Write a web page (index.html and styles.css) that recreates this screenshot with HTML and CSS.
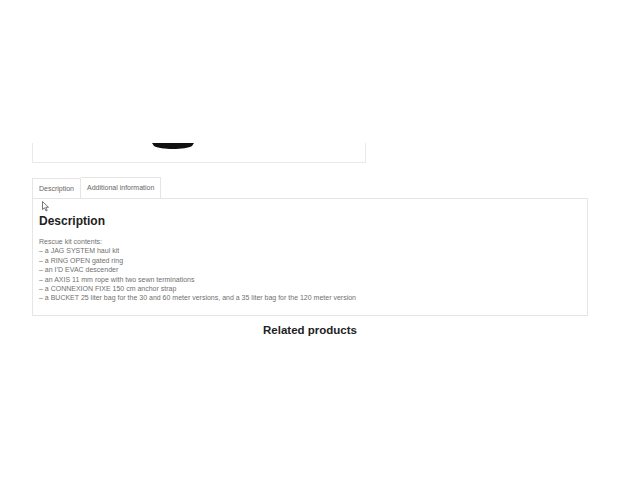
FILE: index.html
```html
<!DOCTYPE html>
<html lang="en">
<head>
    <meta charset="UTF-8">
    <title>Rescue kit</title>
    <link rel="stylesheet" href="styles.css">
</head>
<body>
    <div class="product">
        <div class="gallery">
            <svg class="bag" width="42" height="8" viewBox="0 0 42 8">
                <path d="M0 0 H42 L40 3 C34 7 8 7 2 3 Z" fill="#111"/>
            </svg>
        </div>

        <ul class="tabs">
            <li class="tab active">Description</li>
            <li class="tab">Additional information</li>
        </ul>
        <div class="panel">
            <svg class="cursor" width="8" height="11" viewBox="0 0 8 11">
                <path d="M0.5 0.5 V8.5 L2.5 6.8 L4 10 L5.2 9.4 L3.8 6.3 H6.5 Z" fill="#fff" stroke="#555" stroke-width="0.8"/>
            </svg>
            <h2>Description</h2>
            <p>
                Rescue kit contents:<br>
                – a JAG SYSTEM haul kit<br>
                – a RING OPEN gated ring<br>
                – an I’D EVAC descender<br>
                – an AXIS 11 mm rope with two sewn terminations<br>
                – a CONNEXION FIXE 150 cm anchor strap<br>
                – a BUCKET 25 liter bag for the 30 and 60 meter versions, and a 35 liter bag for the 120 meter version
            </p>
        </div>

        <h3 class="related">Related products</h3>
    </div>
</body>
</html>
```

FILE: styles.css
```css
body {
    margin: 0;
    background-color: #fff;
    font-family: "Liberation Sans", Arial, sans-serif;
    color: #707070;
}
.product {
    width: 556px;
    margin-left: 32px;
    padding-top: 143px;
}
.gallery {
    width: 332px;
    height: 19px;
    border: 1px solid #e9e9e9;
    border-top: none;
    position: relative;
}
.bag {
    display: block;
    margin-left: 119px;
}
.tabs {
    list-style: none;
    margin: 14px 0 0;
    padding: 0;
    display: flex;
}
.tab {
    font-size: 7px;
    color: #666;
    padding: 0 6px;
    height: 20px;
    line-height: 20px;
    border: 1px solid #e5e5e5;
    border-bottom: none;
}
.tab + .tab {
    border-left: none;
}
.tab.active {
    position: relative;
    top: 1px;
    background: #fff;
}
.panel {
    border: 1px solid #e5e5e5;
    padding: 8px 6px 12px;
    position: relative;
}
.cursor {
    position: absolute;
    left: 9px;
    top: 2px;
}
.panel h2 {
    margin: 6px 0 8px;
    font-size: 12px;
    color: #222;
    line-height: 16px;
}
.panel p {
    margin: 0;
    font-size: 7px;
    line-height: 9.4px;
}
.related {
    margin: 8px 0 0;
    text-align: center;
    font-size: 11.5px;
    color: #222;
}
```
